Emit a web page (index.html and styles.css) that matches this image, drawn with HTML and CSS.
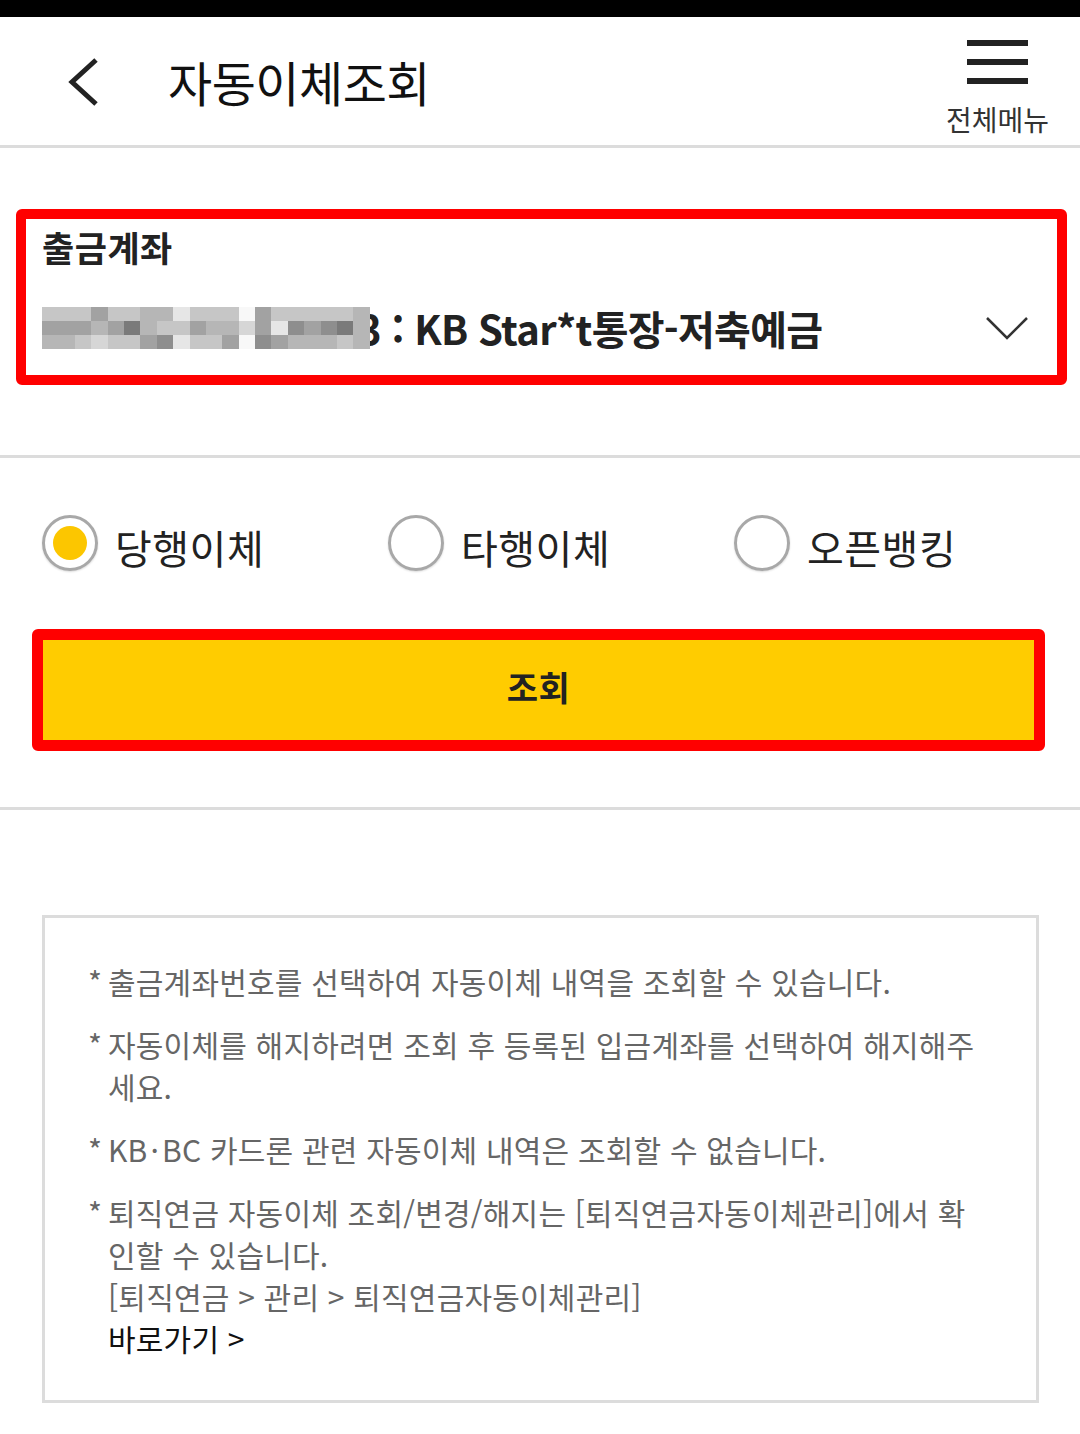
FILE: index.html
```html
<!DOCTYPE html>
<html lang="ko">
<head>
    <meta charset="UTF-8">
    <meta name="viewport" content="width=device-width, initial-scale=1.0">
    <title>자동이체조회</title>
    <link rel="stylesheet" href="styles.css">
</head>
<body>
    <div class="statusbar"></div>

    <div class="header">
        <a class="back" href="#">
            <svg width="34" height="50" viewBox="0 0 34 50"><polyline points="30,3 6,25 30,47" fill="none" stroke="#222" stroke-width="5"/></svg>
        </a>
        <h1 class="title">자동이체조회</h1>
        <a class="menu" href="#">
            <span class="burger"><i></i><i></i><i></i></span>
            <span class="menu-label">전체메뉴</span>
        </a>
    </div>

    <div class="section account-section">
        <div class="account-box">
            <div class="account-label">출금계좌</div>
            <div class="account-row">
                <div class="mosaic">
                    <i class="s3"></i><i class="s3"></i><i class="s3"></i><i class="s5"></i><i class="s3"></i><i class="s3"></i><i class="s4"></i><i class="s4"></i><i class="s1"></i><i class="s3"></i><i class="s3"></i><i class="s3"></i><i class="s0"></i><i class="s5"></i><i class="s3"></i><i class="s3"></i><i class="s3"></i><i class="s3"></i><i class="s3"></i><i class="s4"></i>
                    <i class="s5"></i><i class="s5"></i><i class="s5"></i><i class="s4"></i><i class="s5"></i><i class="s7"></i><i class="s4"></i><i class="s3"></i><i class="s3"></i><i class="s5"></i><i class="s4"></i><i class="s4"></i><i class="s2"></i><i class="s5"></i><i class="s1"></i><i class="s6"></i><i class="s5"></i><i class="s6"></i><i class="s7"></i><i class="s4"></i>
                    <i class="s4"></i><i class="s4"></i><i class="s3"></i><i class="s2"></i><i class="s3"></i><i class="s3"></i><i class="s5"></i><i class="s6"></i><i class="s1"></i><i class="s3"></i><i class="s3"></i><i class="s5"></i><i class="s0"></i><i class="s6"></i><i class="s5"></i><i class="s4"></i><i class="s4"></i><i class="s4"></i><i class="s3"></i><i class="s4"></i>
                </div>
                <span class="account-name">3 : KB Star*t통장-저축예금</span>
                <svg class="caret" width="44" height="28" viewBox="0 0 44 28"><polyline points="2,4 22,24 42,4" fill="none" stroke="#333" stroke-width="2.5"/></svg>
            </div>
        </div>
    </div>

    <div class="section type-section">
        <div class="radios">
            <label class="radio checked"><span class="dot"></span>당행이체</label>
            <label class="radio"><span class="dot"></span>타행이체</label>
            <label class="radio"><span class="dot"></span>오픈뱅킹</label>
        </div>
        <div class="btn-wrap">
            <button class="btn-search" type="button">조회</button>
        </div>
    </div>

    <div class="notice">
        <p><span class="mark">*</span>출금계좌번호를 선택하여 자동이체 내역을 조회할 수 있습니다.</p>
        <p><span class="mark">*</span>자동이체를 해지하려면 조회 후 등록된 입금계좌를 선택하여 해지해주세요.</p>
        <p><span class="mark">*</span>KB<span class="mid">·</span>BC 카드론 관련 자동이체 내역은 조회할 수 없습니다.</p>
        <p><span class="mark">*</span>퇴직연금 자동이체 조회/변경/해지는 [퇴직연금자동이체관리]에서 확인할 수 있습니다.<br>[퇴직연금 &gt; 관리 &gt; 퇴직연금자동이체관리]<br><a class="go" href="#">바로가기 &gt;</a></p>
    </div>
</body>
</html>
```

FILE: styles.css
```css
body {
    font-family: "Noto Sans CJK KR", "Noto Sans", sans-serif;
    margin: 0;
    padding: 0;
    color: #222;
    background: #fff;
}
a {
    color: inherit;
    text-decoration: none;
}
.statusbar {
    height: 17px;
    background: #000;
}

/* header */
.header {
    display: flex;
    align-items: center;
    height: 128px;
    border-bottom: 3px solid #dcdcdc;
}
.back {
    display: flex;
    margin-left: 66px;
    margin-top: 2px;
}
.title {
    margin: 0 0 0 68px;
    font-size: 48px;
    font-weight: 400;
    letter-spacing: -0.5px;
    color: #111;
}
.menu {
    align-self: flex-start;
    margin-left: auto;
    margin-right: 31px;
    padding-top: 23px;
    display: flex;
    flex-direction: column;
    align-items: center;
}
.burger {
    display: block;
    width: 61px;
}
.burger i {
    display: block;
    height: 6px;
    background: #222;
    margin-bottom: 13px;
}
.burger i:last-child {
    margin-bottom: 0;
}
.menu-label {
    margin-top: 18px;
    font-size: 28px;
    line-height: 34px;
    letter-spacing: 0;
    color: #333;
}

/* sections */
.section {
    border-bottom: 3px solid #dcdcdc;
}
.account-section {
    padding: 61px 13px 70px 16px;
}
.account-box {
    border: 10px solid #ff0000;
    border-radius: 6px;
    padding: 6px 28px 17px 16px;
}
.account-label {
    font-size: 35px;
    line-height: 44px;
    font-weight: 700;
    letter-spacing: 0.5px;
    color: #222;
}
.account-row {
    display: flex;
    align-items: center;
    height: 60px;
    margin-top: 29px;
}
.mosaic {
    position: relative;
    z-index: 1;
    display: grid;
    grid-template-columns: repeat(20, 16.4px);
    grid-template-rows: repeat(3, 14px);
    width: 328px;
    flex-shrink: 0;
}
.mosaic i { display: block; }
.s0 { background: #f8f8f8; }
.s1 { background: #e6e6e6; }
.s2 { background: #d6d6d6; }
.s3 { background: #c6c6c6; }
.s4 { background: #b6b6b6; }
.s5 { background: #a2a2a2; }
.s6 { background: #8e8e8e; }
.s7 { background: #7a7a7a; }
.account-name {
    margin-left: -12px;
    font-size: 40px;
    font-weight: 700;
    letter-spacing: -0.7px;
    color: #222;
    white-space: nowrap;
}
.caret {
    margin-left: auto;
}

.type-section {
    padding: 57px 0 56px;
}
.radios {
    display: grid;
    grid-template-columns: repeat(3, 346px);
    padding-left: 42px;
}
.radio {
    box-sizing: border-box;
    display: flex;
    align-items: center;
    gap: 17px;
    font-size: 40px;
    letter-spacing: 0.5px;
    color: #222;
    height: 56px;
    padding-top: 8px;
}
.dot {
    width: 50px;
    height: 50px;
    margin-top: -8px;
    border: 3px solid #a8a8a8;
    border-radius: 50%;
    box-shadow: 0 1px 2px rgba(0, 0, 0, 0.15);
    display: flex;
    align-items: center;
    justify-content: center;
    flex-shrink: 0;
}
.checked .dot::after {
    content: "";
    width: 34px;
    height: 34px;
    border-radius: 50%;
    background: #fcc600;
}
.btn-wrap {
    margin: 58px 35px 0 32px;
    border: 11px solid #ff0000;
    border-radius: 6px;
}
.btn-search {
    display: block;
    width: 100%;
    height: 100px;
    padding: 0 0 8px;
    border: none;
    background: #ffcc00;
    font-family: inherit;
    font-size: 34px;
    font-weight: 700;
    color: #222;
    letter-spacing: 0.5px;
}

/* notice box */
.notice {
    margin: 105px 41px 0 42px;
    border: 3px solid #dcdcdc;
    padding: 42px 44px 41px 43px;
}
.notice p {
    margin: 0 0 21px;
    padding-left: 20px;
    text-indent: -20px;
    font-size: 30px;
    line-height: 42px;
    letter-spacing: 0.2px;
    color: #666;
}
.notice p:last-child {
    margin-bottom: 0;
}
.mark {
    display: inline-block;
    width: 20px;
    text-indent: 0;
}
.mid {
    margin: 0 3px;
}
.go {
    color: #111;
}
```
